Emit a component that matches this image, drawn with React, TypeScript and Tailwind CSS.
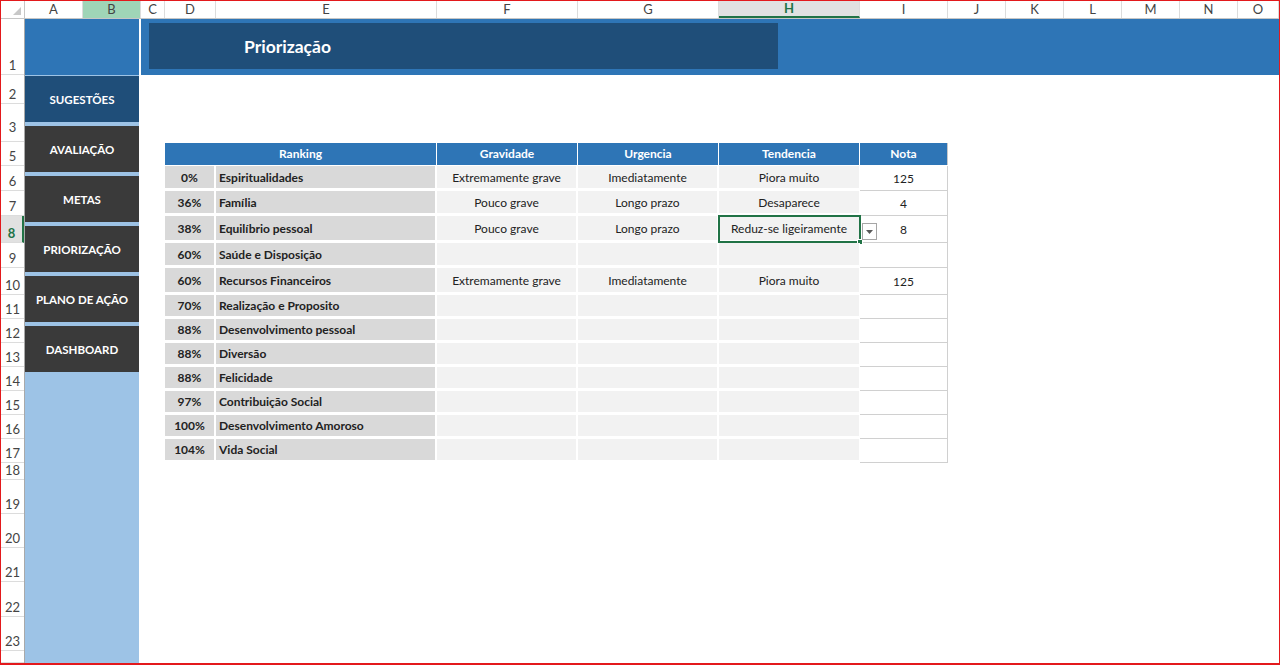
import React from 'react';

const COLS = [
  { l: 'A', w: 'w-[58px]' },
  { l: 'B', w: 'w-[58px]', sel: 'b' },
  { l: 'C', w: 'w-[24px]' },
  { l: 'D', w: 'w-[51px]' },
  { l: 'E', w: 'w-[221px]' },
  { l: 'F', w: 'w-[141px]' },
  { l: 'G', w: 'w-[141px]' },
  { l: 'H', w: 'w-[141px]', sel: 'h' },
  { l: 'I', w: 'w-[88px]' },
  { l: 'J', w: 'w-[58px]' },
  { l: 'K', w: 'w-[58px]' },
  { l: 'L', w: 'w-[58px]' },
  { l: 'M', w: 'w-[58px]' },
  { l: 'N', w: 'w-[58px]' },
  { l: 'O', w: 'flex-1' },
];

const ROW_HEADS = [
  { n: '1', h: 'h-[56px] pb-px' },
  { n: '2', h: 'h-[29px] pb-px' },
  { n: '3', h: 'h-[38px] pb-[6px]' },
  { n: '5', h: 'h-[24px] pb-px' },
  { n: '6', h: 'h-[25px] pb-px' },
  { n: '7', h: 'h-[25px] pb-px' },
  { n: '8', h: 'h-[27px] pb-px', sel: true },
  { n: '9', h: 'h-[25px] pb-px' },
  { n: '10', h: 'h-[27px] pb-px' },
  { n: '11', h: 'h-[24px] pb-px' },
  { n: '12', h: 'h-[24px] pb-px' },
  { n: '13', h: 'h-[24px] pb-px' },
  { n: '14', h: 'h-[24px] pb-px' },
  { n: '15', h: 'h-[24px] pb-px' },
  { n: '16', h: 'h-[24px] pb-px' },
  { n: '17', h: 'h-[24px] pb-px' },
  { n: '18', h: 'h-[17px] pb-px' },
  { n: '19', h: 'h-[34px] pb-px' },
  { n: '20', h: 'h-[34px] pb-px' },
  { n: '21', h: 'h-[34px] pb-px' },
  { n: '22', h: 'h-[35px] pb-px' },
  { n: '23', h: 'h-[34px] pb-px' },
  { n: '', h: 'flex-1' },
];

const MENU = [
  { label: 'SUGESTÕES', bg: 'bg-[#1f4e79]' },
  { label: 'AVALIAÇÃO', bg: 'bg-[#3a3a3a]' },
  { label: 'METAS', bg: 'bg-[#3a3a3a]' },
  { label: 'PRIORIZAÇÃO', bg: 'bg-[#3a3a3a]' },
  { label: 'PLANO DE AÇÃO', bg: 'bg-[#3a3a3a]' },
  { label: 'DASHBOARD', bg: 'bg-[#3a3a3a]' },
];

const RANKING = [
  { p: '0%', name: 'Espiritualidades', g: 'Extremamente grave', u: 'Imediatamente', t: 'Piora muito', nota: '125', h: 'h-[25px]' },
  { p: '36%', name: 'Família', g: 'Pouco grave', u: 'Longo prazo', t: 'Desaparece', nota: '4', h: 'h-[25px]' },
  { p: '38%', name: 'Equilíbrio pessoal', g: 'Pouco grave', u: 'Longo prazo', t: 'Reduz-se ligeiramente', nota: '8', h: 'h-[27px]', active: true },
  { p: '60%', name: 'Saúde e Disposição', g: '', u: '', t: '', nota: '', h: 'h-[25px]' },
  { p: '60%', name: 'Recursos Financeiros', g: 'Extremamente grave', u: 'Imediatamente', t: 'Piora muito', nota: '125', h: 'h-[27px]' },
  { p: '70%', name: 'Realização e Proposito', g: '', u: '', t: '', nota: '', h: 'h-[24px]' },
  { p: '88%', name: 'Desenvolvimento pessoal', g: '', u: '', t: '', nota: '', h: 'h-[24px]' },
  { p: '88%', name: 'Diversão', g: '', u: '', t: '', nota: '', h: 'h-[24px]' },
  { p: '88%', name: 'Felicidade', g: '', u: '', t: '', nota: '', h: 'h-[24px]' },
  { p: '97%', name: 'Contribuição Social', g: '', u: '', t: '', nota: '', h: 'h-[24px]' },
  { p: '100%', name: 'Desenvolvimento Amoroso', g: '', u: '', t: '', nota: '', h: 'h-[24px]' },
  { p: '104%', name: 'Vida Social', g: '', u: '', t: '', nota: '', h: 'h-[24px]' },
];

function ColumnHeaders() {
  return (
    <div className="flex h-[18px] border-b border-[#c6c6c6] bg-white text-[13px] text-[#444]">
      <div className="relative w-[24px] border-r border-[#c6c6c6]">
        <svg className="absolute right-[3px] bottom-[3px]" width="8" height="8" viewBox="0 0 8 8">
          <polygon points="8,0 8,8 0,8" fill="#c8c8c8" />
        </svg>
      </div>
      {COLS.map((c) => (
        <div
          key={c.l}
          className={`${c.w} flex items-center justify-center border-r border-[#dcdcdc] leading-none ${
            c.sel === 'b' ? 'bg-[#9fd5b7]' : c.sel === 'h' ? 'bg-[#e1e1e1] text-[#217346] font-bold border-b-2 border-b-[#217346]' : ''
          }`}
        >
          {c.l}
        </div>
      ))}
    </div>
  );
}

function RowHeaders() {
  return (
    <div className="flex w-[24px] flex-col border-r border-[#a9a9a9] bg-white text-[13px] text-[#444]">
      {ROW_HEADS.map((r, i) => (
        <div
          key={i}
          className={`${r.h} flex items-end justify-center border-b border-[#dcdcdc] leading-[16px] ${
            r.sel ? 'bg-[#e1e1e1] text-[#217346] font-bold border-r-2 border-r-[#217346]' : ''
          }`}
        >
          {r.n}
        </div>
      ))}
    </div>
  );
}

function Table() {
  return (
    <div className="w-[783px] text-[12px] text-[#222]">
      <div className="flex h-[23px] border-b border-white bg-[#2e75b6] font-bold text-white">
        <div className="flex w-[272px] items-center justify-center border-r border-white">Ranking</div>
        <div className="flex w-[141px] items-center justify-center border-r border-white">Gravidade</div>
        <div className="flex w-[141px] items-center justify-center border-r border-white">Urgencia</div>
        <div className="flex w-[141px] items-center justify-center border-r border-white">Tendencia</div>
        <div className="flex w-[88px] items-center justify-center border-r border-[#c8c8c8]">Nota</div>
      </div>
      {RANKING.map((r) => (
        <div key={r.name} className={`${r.h} flex`}>
          <div className="flex w-[51px] items-center justify-center border-r-2 border-b-[3px] border-white bg-[#d9d9d9] pt-px font-bold">
            {r.p}
          </div>
          <div className="flex w-[221px] items-center border-r-2 border-b-[3px] border-white bg-[#d9d9d9] pl-[3px] pt-px font-bold">
            {r.name}
          </div>
          <div className="flex w-[141px] items-center justify-center border-r-2 border-b-[3px] border-white bg-[#f2f2f2] pt-px">
            {r.g}
          </div>
          <div className="flex w-[141px] items-center justify-center border-r-2 border-b-[3px] border-white bg-[#f2f2f2] pt-px">
            {r.u}
          </div>
          <div className="relative flex w-[141px] items-center justify-center border-r border-b-[3px] border-white bg-[#f2f2f2] pt-px">
            {r.t}
            {r.active && (
              <>
                <div className="absolute left-[-1px] top-[-1px] h-[28px] w-[143px] border-2 border-[#217346]" />
                <div className="absolute left-[138px] top-[23px] h-[6px] w-[6px] border border-white bg-[#217346]" />
                <div className="absolute left-[143px] top-[7px] z-10 flex h-[17px] w-[15px] items-center justify-center border border-[#a6a6a6] bg-white">
                  <svg width="7" height="4" viewBox="0 0 7 4">
                    <polygon points="0,0 7,0 3.5,4" fill="#595959" />
                  </svg>
                </div>
              </>
            )}
          </div>
          <div className="flex w-[88px] items-center justify-center border-r border-b border-[#d0d0d0] bg-white pt-px">
            {r.nota}
          </div>
        </div>
      ))}
    </div>
  );
}

export default function App() {
  return (
    <div className="flex h-[665px] w-[1280px] flex-col overflow-hidden border border-b-2 border-[#e3191c] bg-white font-[Lato,sans-serif]">
      <ColumnHeaders />
      <div className="flex flex-1">
        <RowHeaders />
        <div className="flex flex-1 flex-col">
          {/* row 1 banner */}
          <div className="flex h-[56px] bg-[#2e75b6]">
            <div className="w-[114px]" />
            <div className="w-[2px] bg-white" />
            <div className="ml-[8px] mt-[4px] flex h-[46px] w-[629px] items-center bg-[#1f4e79] pl-[95px] pt-[2px] text-[17.5px] font-bold text-white">
              Priorização
            </div>
          </div>
          <div className="flex flex-1">
            {/* sidebar */}
            <div className="flex w-[114px] flex-col gap-[4px] bg-[#9dc3e6] pt-px">
              {MENU.map((m) => (
                <div
                  key={m.label}
                  className={`${m.bg} flex h-[46px] items-center justify-center pt-px text-[11.5px] font-bold text-white`}
                >
                  {m.label}
                </div>
              ))}
            </div>
            <div className="w-[2px] bg-white" />
            <div className="flex-1 pl-[24px] pt-[68px]">
              <Table />
            </div>
          </div>
        </div>
      </div>
    </div>
  );
}
